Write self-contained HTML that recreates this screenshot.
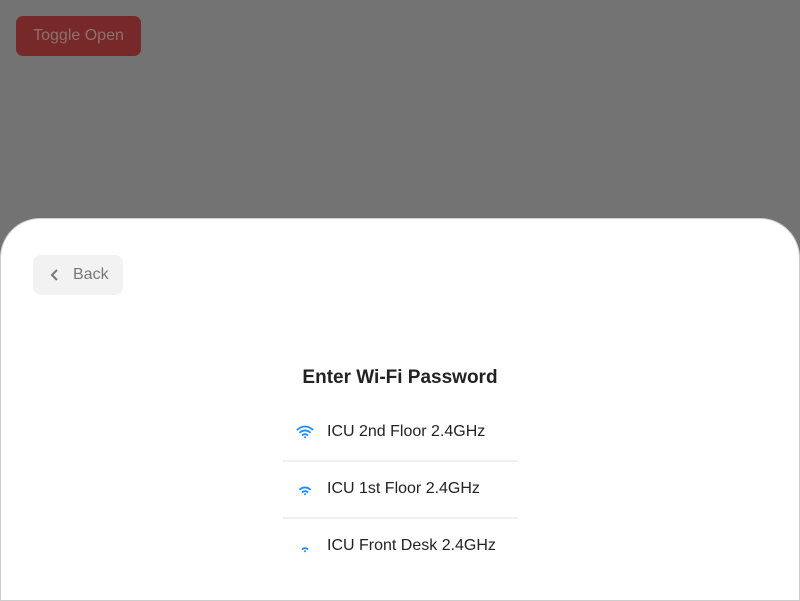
<!DOCTYPE html>
<html><head><style>
body{margin:0;width:800px;height:600px;background:#737373;font-family:"Liberation Sans",sans-serif;position:relative;overflow:hidden}
.tog{position:absolute;left:16px;top:16px;width:125px;height:40px;background:#772828;border-radius:7px;color:#8f7070;font-size:16px;line-height:40px;text-align:center}
.sheet{position:absolute;left:0;top:218px;width:800px;height:383px;box-sizing:border-box;background:#fff;border:1px solid #ccc;border-radius:40px 40px 0 0}
.back{position:absolute;left:32px;top:36px;width:90px;height:40px;background:#f2f2f2;border-radius:8px;color:#777;font-size:16px;line-height:40px}
.back span{position:absolute;left:40px}
h1{position:absolute;left:0;width:100%;top:148px;margin:0;text-align:center;font-size:19px;font-weight:bold;color:#222}
.row{position:absolute;left:282px;width:235px;height:56px;border-bottom:2px solid #f0f0f0;font-size:16px;color:#222}
.row span{position:absolute;left:44px;top:19px}
.row svg{position:absolute;left:13px;top:21px}
</style></head><body>
<div class="tog">Toggle Open</div>
<div class="sheet">
<div class="back"><svg style="position:absolute;left:17px;top:13px" width="10" height="14"><path d="M7 2 L2 7 L7 12" stroke="#777" stroke-width="2" fill="none"/></svg><span>Back</span></div>
<h1>Enter Wi-Fi Password</h1>
<div class="row" style="top:185px"><svg width="18" height="14" viewBox="0 0 18 14"><g stroke="#1a8cff" stroke-width="1.8" fill="none" stroke-linecap="round"><path d="M1.5 4.5 Q9 -1.5 16.5 4.5"/><path d="M4 7.3 Q9 3.5 14 7.3"/><path d="M6.5 10 Q9 8.3 11.5 10"/></g><circle cx="9" cy="12.3" r="1" fill="#1a8cff"/></svg><span>ICU 2nd Floor 2.4GHz</span></div>
<div class="row" style="top:242px"><svg width="18" height="14" viewBox="0 0 18 14"><g stroke="#1a8cff" stroke-width="1.8" fill="none" stroke-linecap="round"><path d="M4 7.3 Q9 3.5 14 7.3"/><path d="M6.5 10 Q9 8.3 11.5 10"/></g><circle cx="9" cy="12.3" r="1" fill="#1a8cff"/></svg><span>ICU 1st Floor 2.4GHz</span></div>
<div class="row" style="top:299px;border:none"><svg width="18" height="14" viewBox="0 0 18 14"><g stroke="#1a8cff" stroke-width="1.8" fill="none" stroke-linecap="round"><path d="M6.5 10 Q9 8.3 11.5 10"/></g><circle cx="9" cy="12.3" r="1" fill="#1a8cff"/></svg><span>ICU Front Desk 2.4GHz</span></div>
</div>
</body></html>
